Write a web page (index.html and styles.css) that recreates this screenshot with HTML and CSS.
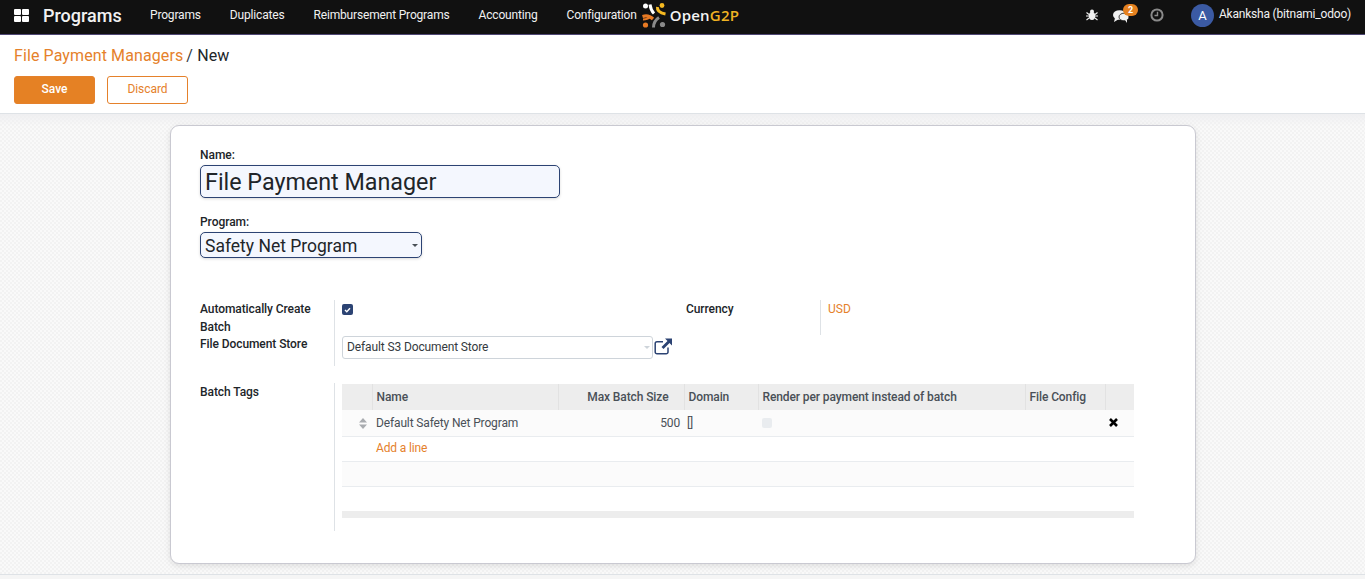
FILE: index.html
```html
<!DOCTYPE html>
<html lang="en">
<head>
<meta charset="utf-8">
<title>File Payment Managers</title>
<link rel="stylesheet" href="styles.css">
</head>
<body>
<header class="navbar">
  <svg class="apps" width="15" height="13" viewBox="0 0 15 13"><rect x="0" y="0" width="7" height="6" rx="1"/><rect x="8" y="0" width="7" height="6" rx="1"/><rect x="0" y="7" width="7" height="6" rx="1"/><rect x="8" y="7" width="7" height="6" rx="1"/></svg>
  <span class="brand">Programs</span>
  <nav class="menu">
    <a>Programs</a><a>Duplicates</a><a>Reimbursement Programs</a><a>Accounting</a><a>Configuration</a>
  </nav>
  <div class="logo">
    <svg width="24" height="26" viewBox="0 0 24 26">
      <circle cx="3.500" cy="4" r="2.500" fill="#fff"/>
      <path d="M8 2.500C8.500 6 9.500 9 12 11.500" stroke="#fff" stroke-width="3" fill="none"/>
      <circle cx="20" cy="3.500" r="2.400" fill="#f5b921"/>
      <path d="M15.500 5C15 8.500 18 11 23.500 12" stroke="#f5b921" stroke-width="3" fill="none"/>
      <path d="M0.500 14.500C4 13.500 8 14 11 17" stroke="#e87a24" stroke-width="3.200" fill="none"/>
      <path d="M1 17.500C4 17.500 6 17 8 15" stroke="#e87a24" stroke-width="2" fill="none"/>
      <circle cx="3.500" cy="23" r="2.600" fill="#e87a24"/>
      <path d="M11.500 25.500C11.500 21 13 18 17 15.500" stroke="#8a8a8a" stroke-width="3" fill="none"/>
      <circle cx="20.500" cy="22.500" r="2.600" fill="#8a8a8a"/>
    </svg>
    <span class="logo-text">Open<b>G2P</b></span>
  </div>
  <div class="systray">
    <svg class="bug" width="12" height="12" viewBox="0 0 12 12"><ellipse cx="6" cy="7" rx="3.200" ry="4" fill="#f1f1f1"/><circle cx="6" cy="2.600" r="2" fill="#f1f1f1"/><path d="M0.500 3.500 3 5.500M11.500 3.500 9 5.500M0 7H3M12 7H9M0.500 11 3 9M11.500 11 9 9" stroke="#f1f1f1" stroke-width="1.100"/></svg>
    <span class="chat">
      <svg width="16" height="14" viewBox="0 0 16 14"><ellipse cx="6.500" cy="6" rx="6.500" ry="4.800" fill="#f1f1f1"/><ellipse cx="11" cy="8" rx="5" ry="3.800" fill="#f1f1f1" stroke="#111" stroke-width="0.800"/><path d="M2 9 1 13 6 10ZM12 11 14 14 14 10Z" fill="#f1f1f1"/></svg>
      <span class="badge">2</span>
    </span>
    <svg class="clock" width="14" height="14" viewBox="0 0 14 14"><circle cx="7" cy="7" r="5.600" fill="none" stroke="#8a8a8a" stroke-width="2"/><path d="M7.500 3.800V7.500H4.500" fill="none" stroke="#8a8a8a" stroke-width="1.400"/></svg>
    <span class="user"><span class="avatar">A</span><span>Akanksha (bitnami_odoo)</span></span>
  </div>
</header>

<section class="control">
  <div class="breadcrumb"><a>File Payment Managers</a> <span class="sep">/</span> <span>New</span></div>
  <div class="buttons">
    <button class="btn primary">Save</button>
    <button class="btn secondary">Discard</button>
  </div>
</section>

<main class="content">
  <div class="sheet">
    <label class="top-label">Name:</label>
    <div class="name-input">File Payment Manager</div>
    <label class="top-label prog-label">Program:</label>
    <div class="program-input"><span>Safety Net Program</span><i class="caret"></i></div>

    <div class="group">
      <div class="col-left">
        <div class="row auto">
          <div class="lbl">Automatically Create Batch</div>
          <div class="val"><span class="check"><svg width="7" height="6" viewBox="0 0 7 6"><path d="M1 3 2.800 4.800 6 1.200" fill="none" stroke="#fff" stroke-width="1.400"/></svg></span></div>
        </div>
        <div class="row store">
          <div class="lbl">File Document Store</div>
          <div class="val store-val">
            <div class="store-select"><span>Default S3 Document Store</span><i class="caret light"></i></div>
            <svg class="ext" width="18" height="17" viewBox="0 0 18 17"><path d="M14 9.500V14A1.800 1.800 0 0 1 12.200 15.800H3A1.800 1.800 0 0 1 1.200 14V5.500A1.800 1.800 0 0 1 3 3.700H9" fill="none" stroke="#2c4373" stroke-width="1.500"/><path d="M11 0.500H18V7.500L15.500 5 9.500 11 7.500 9 13.500 3Z" fill="#2c4373"/></svg>
          </div>
        </div>
      </div>
      <div class="col-right">
        <div class="lbl cur-lbl">Currency</div>
        <div class="cur-val"><a>USD</a></div>
      </div>
    </div>

    <div class="tags">
      <div class="lbl">Batch Tags</div>
      <div class="tags-val">
        <table class="list">
          <colgroup><col class="c-h"><col class="c-n"><col class="c-m"><col class="c-d"><col class="c-r"><col class="c-f"><col class="c-x"></colgroup>
          <thead>
            <tr><th></th><th>Name</th><th class="num">Max Batch Size</th><th>Domain</th><th>Render per payment instead of batch</th><th>File Config</th><th></th></tr>
          </thead>
          <tbody>
            <tr class="odd"><td class="handle"><svg width="8" height="11" viewBox="0 0 8 11"><path d="M4 0 8 4.500H0ZM4 11 0 6.500H8Z" fill="#a9acb0"/></svg></td><td>Default Safety Net Program</td><td class="num">500</td><td class="dom">[]</td><td><span class="cb"></span></td><td></td><td class="del"><svg width="9" height="9" viewBox="0 0 9 9"><path d="M1 1 8 8M8 1 1 8" stroke="#000" stroke-width="2.600"/></svg></td></tr>
            <tr><td></td><td colspan="6" class="add-cell"><a class="add">Add a line</a></td></tr>
            <tr class="odd"><td colspan="7"></td></tr>
            <tr class="last"><td colspan="7"></td></tr>
          </tbody>
          <tfoot><tr><td colspan="7"></td></tr></tfoot>
        </table>
      </div>
    </div>
  </div>
</main>
<div class="bottom"></div>
</body>
</html>
```
FILE: styles.css
```css
* { box-sizing: border-box; }
html, body { margin: 0; height: 579px; overflow: hidden; }
body { font-family: Roboto, "Liberation Sans", sans-serif; font-size: 12px; color: #343a40; background: #fff; display: flex; flex-direction: column; }

.navbar { height: 35px; flex: none; background: #111; border-bottom: 1px solid #4f4774; display: flex; align-items: center; color: #f1f1f1; padding-left: 14px; position: relative; }
.apps { fill: #fff; flex: none; margin-top: -3px; }
.brand { font-size: 18px; font-weight: 500; margin-left: 14px; color: #f1f1f1; width: 79px; margin-top: -4px; }
.menu { display: flex; margin-left: 28px; gap: 29px; margin-top: -4px; }
.menu a { color: #f1f1f1; font-size: 12px; letter-spacing: -0.17px; }
.logo { display: flex; align-items: center; margin-left: 5px; margin-top: -4px; }
.logo-text { font-family: "Open Sans", Lato, sans-serif; font-size: 15px; font-weight: 600; margin-left: 4px; color: #f4f4f4; letter-spacing: 0.2px; margin-top: -1px; }
.logo-text b { color: #f0b323; font-weight: 600; }
.systray { margin-left: auto; display: flex; align-items: center; margin-top: -6px; padding-right: 14px; }
.bug { margin-right: 15px; margin-top: 1px; }
.chat { position: relative; display: flex; margin-right: 21px; margin-top: 3px; }
.badge { position: absolute; left: 10px; top: -5px; width: 15px; height: 12px; border-radius: 6px; background: #e5811f; color: #fff; font-size: 9px; font-weight: 700; display: flex; align-items: center; justify-content: center; }
.clock { margin-right: 27px; margin-top: 1px; }
.user { display: flex; align-items: center; gap: 5px; font-size: 12px; letter-spacing: -0.2px; }
.avatar { width: 23px; height: 23px; border-radius: 50%; background: #3b5aa3; color: #fff; font-size: 13px; display: flex; align-items: center; justify-content: center; margin-top: 3px; letter-spacing: 0; }

.control { flex: none; height: 79px; border-bottom: 1px solid #dee2e6; padding: 11px 14px 0; background: #fff; }
.breadcrumb { font-size: 16px; line-height: 19px; color: #212529; letter-spacing: 0.1px; }
.breadcrumb a { color: #e5812b; }
.breadcrumb .sep { color: #343a40; margin-left: -1px; }
.buttons { display: flex; gap: 12px; margin-top: 11px; }
.btn { width: 81px; height: 28px; border-radius: 3px; font-family: inherit; font-size: 12px; padding: 0 0 2px; border: 1px solid #e5812b; letter-spacing: -0.05px; }
.primary { background: #e58124; color: #fff; font-weight: 500; }
.secondary { background: #fff; color: #e5812b; }

.content { flex: none; height: 461px; background-color: #f6f6f6; background-image: conic-gradient(#f2f2f2 25%, #f9f9f9 0 50%, #f2f2f2 0 75%, #f9f9f9 0); background-size: 4px 4px; padding: 11px 0 0 170px; border-bottom: 1px solid #dee2e6; position: relative; }
.content::before { content: ""; position: absolute; left: 0; right: 0; top: 0; height: 12px; background: linear-gradient(#efeff1, rgba(246,246,246,0)); }
.bottom { flex: 1; background: #f5f5f5; }
.sheet { position: relative; width: 1026px; height: 439px; background: #fff; border: 1px solid #c9c9d1; border-radius: 9px; box-shadow: 0 2px 6px rgba(0,0,0,.1); padding: 22px 29px 0; }
.top-label { display: block; font-weight: 500; font-size: 12px; line-height: 14px; color: #212529; letter-spacing: -0.05px; }
.name-input { width: 360px; height: 33px; margin-top: 3px; background: #f4f7fe; border: 1px solid #2c4373; border-radius: 5px; box-shadow: 0 1px 3px rgba(0,0,0,.15); font-size: 23.300px; line-height: 32px; padding-left: 4px; color: #212529; }
.prog-label { margin-top: 17px; }
.program-input { width: 222px; height: 26px; margin-top: 3px; background: #f4f7fe; border: 1px solid #2c4373; border-radius: 5px; box-shadow: 0 1px 3px rgba(0,0,0,.15); font-size: 17.500px; line-height: 24px; padding: 0 3px 0 4px; color: #212529; display: flex; justify-content: space-between; align-items: center; }
.program-input span { padding-top: 2px; }
.caret { width: 0; height: 0; border: 3px solid transparent; border-top-color: #495057; border-bottom: 0; }
.caret.light { border-top-color: #ced4da; margin-right: -2px; }

.group { display: flex; margin-top: 42px; }
.col-left { width: 486px; }
.row { display: flex; }
.lbl { width: 134px; font-weight: 500; font-size: 12px; line-height: 18px; color: #212529; flex: none; letter-spacing: -0.08px; }
.auto .lbl { height: 35px; padding-right: 20px; }
.auto .val { height: 35px; border-left: 1px solid #dee2e6; padding: 3px 0 0 7px; }
.store .lbl { height: 31px; }
.store .val { height: 31px; border-left: 1px solid #dee2e6; padding-left: 7px; }
.check { display: flex; align-items: center; justify-content: center; width: 11px; height: 11px; background: #2c4373; border-radius: 2px; margin-top: 1px; }
.store-val { display: flex; align-items: flex-start; }
.store-select { width: 311px; height: 23px; border: 1px solid #ced4da; border-radius: 3px; padding: 0 4px; font-size: 12px; line-height: 21px; display: flex; justify-content: space-between; align-items: center; color: #343a40; margin-top: 1px; letter-spacing: -0.12px; }
.ext { margin: 3px 0 0 1px; }
.col-right { display: flex; }
.cur-lbl { width: 134px; }
.cur-val { border-left: 1px solid #dee2e6; height: 35px; padding: 0 0 0 7px; line-height: 18px; }
.cur-val a { color: #e5812b; }

.tags { display: flex; margin-top: 17px; }
.tags-val { border-left: 1px solid #dee2e6; padding-left: 7px; height: 148px; }
.list { width: 792px; border-collapse: collapse; table-layout: fixed; font-size: 12px; color: #495057; margin-top: 1px; letter-spacing: -0.14px; }
.c-h { width: 30px; } .c-n { width: 186px; } .c-m { width: 126px; } .c-d { width: 74px; } .c-r { width: 267px; } .c-f { width: 80px; } .c-x { width: 29px; }
.list th { height: 26px; background: #ededed; font-weight: 500; text-align: left; padding: 0 4px; border-left: 1px solid #e2e2e2; color: #495057; letter-spacing: -0.1px; }
.list th:first-child { border-left: 0; }
.list th.num { text-align: right; padding-right: 15px; }
.list td { height: 25px; padding: 0 4px; border-bottom: 1px solid #e9ecef; }
.list tbody tr:first-child td { height: 26px; }
.list td.num { text-align: right; padding-right: 4px; }
.list td.dom { padding-left: 3px; }
.list td.add-cell { padding-bottom: 2px; }
.list .odd td { background: #fbfbfb; }
.handle { text-align: right; padding-right: 5px !important; }
.handle svg { display: inline-block; vertical-align: middle; }
.del svg { display: block; margin: 0; }
.cb { display: block; width: 10px; height: 10px; background: #e9ecef; border-radius: 2px; }
.add { color: #e5812b; }
.list tfoot td { height: 7px; background: #ededed; border: 0; padding: 0; }
.list tbody tr.last td { border-bottom: 0; height: 25px; }
```
